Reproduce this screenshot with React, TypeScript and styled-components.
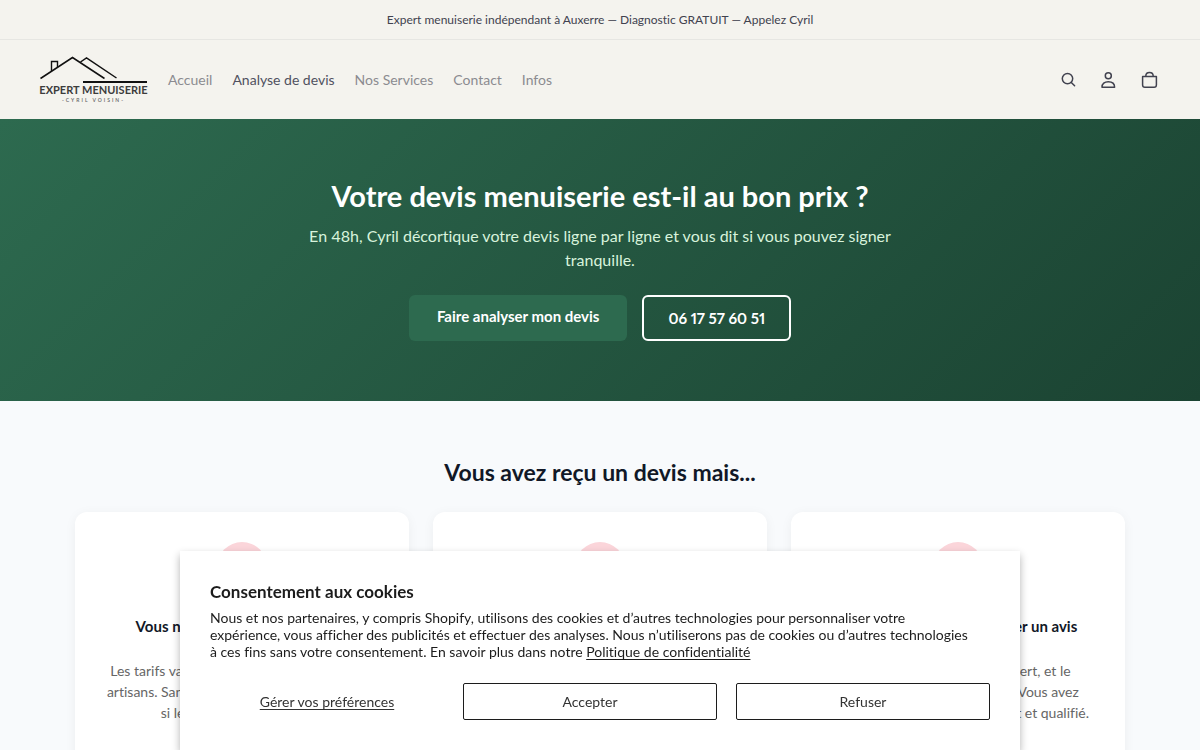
import React from "react";
import styled, { createGlobalStyle, css } from "styled-components";

const GlobalStyle = createGlobalStyle`
  *, *::before, *::after { box-sizing: border-box; }
  body {
    margin: 0;
    background: #f8fafc;
    color: #111827;
    font-family: Lato, "Liberation Sans", sans-serif;
    font-size: 14px;
    font-variant-ligatures: none;
    font-variant-numeric: proportional-nums;
  }
  h1, h2, h3, p { margin: 0; }
  button { font-family: inherit; cursor: pointer; }
`;

const Announcement = styled.p`
  height: 40px;
  padding: 0 20px;
  border-bottom: 1px solid #e6e6e2;
  background: #f4f3ee;
  color: #41424f;
  font-size: 12px;
  line-height: 39px;
  text-align: center;
`;

const Header = styled.header`
  display: flex;
  align-items: center;
  height: 79px;
  padding: 0 32px 0 40px;
  background: #f4f3ee;
`;

const Logo = styled.a`
  display: flex;
  flex-direction: column;
  align-items: center;
  width: 107px;
  color: #3c3c3c;
  text-decoration: none;
  white-space: nowrap;
`;

const LogoName = styled.span`
  font-size: 11px;
  font-weight: 700;
  line-height: 12px;
`;

const LogoTag = styled.span`
  color: #666;
  font-size: 5px;
  font-weight: 600;
  line-height: 8px;
  letter-spacing: 2px;
`;

const Nav = styled.nav`
  display: flex;
  flex: 1;
  gap: 20px;
  padding-left: 21px;
`;

const NavLink = styled.a<{ $current?: boolean }>`
  color: ${(p) => (p.$current ? "#50515f" : "#8b8b90")};
  font-size: 14px;
  line-height: 20px;
  text-decoration: none;
`;

const IconButton = styled.button`
  display: grid;
  place-items: center;
  width: 40px;
  height: 40px;
  padding: 0;
  border: 0;
  background: none;
  color: #41424f;
`;

const Hero = styled.section`
  display: flex;
  flex-direction: column;
  align-items: center;
  padding: 60px 20px;
  background: linear-gradient(135deg, #2d6a4f, #1b4332);
  text-align: center;
`;

const HeroTitle = styled.h1`
  color: #fff;
  font-size: 29px;
  font-weight: 700;
  line-height: 34px;
`;

const HeroText = styled.p`
  max-width: 600px;
  padding: 11px 0 23px;
  color: #d8f3dc;
  font-size: 16px;
  line-height: 24px;
`;

const HeroActions = styled.div`
  display: flex;
  flex-wrap: wrap;
  justify-content: center;
  gap: 15px;
`;

const HeroLink = styled.a<{ $outline?: boolean }>`
  height: 46px;
  border-radius: 6px;
  color: #fff;
  font-size: 15px;
  font-weight: 700;
  line-height: 42px;
  text-decoration: none;
  ${(p) =>
    p.$outline
      ? css`
          padding: 0 24px;
          border: 2px solid #fff;
        `
      : css`
          padding: 0 28px;
          background: #2d6a4f;
        `}
`;

const Doubts = styled.section`
  max-width: 1090px;
  margin: 0 auto;
  padding: 54px 20px;
`;

const SectionTitle = styled.h2`
  color: #111827;
  font-size: 23px;
  font-weight: 700;
  line-height: 34px;
  text-align: center;
`;

const CardGrid = styled.div`
  display: grid;
  grid-template-columns: repeat(3, 1fr);
  gap: 24px;
  padding-top: 23px;
`;

const Card = styled.article`
  display: flex;
  flex-direction: column;
  align-items: center;
  padding: 30px 20px 50px;
  border-radius: 12px;
  background: #fff;
  box-shadow: 0 2px 12px rgba(0, 0, 0, 0.05);
  text-align: center;
`;

const CardBadge = styled.span`
  width: 50px;
  height: 50px;
  border-radius: 50%;
  background: #fbd5da;
`;

const CardTitle = styled.h3`
  padding-top: 21px;
  color: #111827;
  font-size: 15px;
  font-weight: 700;
  line-height: 26px;
`;

const CardText = styled.p`
  padding-top: 21px;
  color: #666;
  font-size: 14px;
  line-height: 21px;
`;

const Consent = styled.div`
  position: fixed;
  bottom: 0;
  left: 50%;
  width: calc(100% - 40px);
  max-width: 840px;
  padding: 30px;
  transform: translateX(-50%);
  background: #fff;
  box-shadow: 0 4px 8px rgba(0, 0, 0, 0.3);
  color: #1c1c1c;
`;

const ConsentTitle = styled.h2`
  font-size: 17px;
  font-weight: 700;
  line-height: 21px;
`;

const ConsentText = styled.p`
  max-width: 766px;
  padding: 7px 0 23px;
  font-size: 14px;
  line-height: 17px;
`;

const ConsentLink = styled.a`
  color: inherit;
  text-underline-offset: 2px;
`;

const ConsentActions = styled.div`
  display: grid;
  grid-template-columns: 1fr 254px 254px;
  gap: 19px;
`;

const ConsentButton = styled.button<{ $plain?: boolean }>`
  height: 37px;
  padding: 0;
  border: ${(p) => (p.$plain ? "0" : "1px solid #1c1c1c")};
  border-radius: 2px;
  background: #fff;
  color: #333;
  font-size: 14px;
  text-decoration: ${(p) => (p.$plain ? "underline" : "none")};
  text-underline-offset: 2px;
`;

const navItems = ["Accueil", "Analyse de devis", "Nos Services", "Contact", "Infos"];

const cards = [
  {
    id: "price",
    title: "Vous ne comprenez pas le détail",
    lines: [
      "Les tarifs varient du simple au double selon",
      "artisans. Sans repère, impossible de le savoir",
      "si le prix proposé est juste.",
    ],
  },
  { id: "quality", title: "", lines: [] },
  {
    id: "advice",
    title: "Vous souhaiteriez demander un avis",
    lines: [
      "Vous n’êtes pas toujours expert, et le",
      "vendeur veut signer très vite. Vous avez",
      "besoin d’un avis neutre, concret et qualifié.",
    ],
  },
];

const RoofMark = () => (
  <svg width="107" height="28" viewBox="0 0 107 28" fill="none" stroke="#111" aria-hidden="true">
    <path d="M0.5 22.5 L32.5 1.5 L64.5 22.5" strokeWidth="1.5" />
    <path d="M11.5 15 V5.5 H17.5 V11" strokeWidth="1.4" />
    <path d="M40.5 6 L46.5 2 L76.5 22" strokeWidth="1.5" />
    <path d="M43 26 H107" strokeWidth="2" />
  </svg>
);

const Icon = ({ children }: { children: React.ReactNode }) => (
  <svg
    width="20"
    height="20"
    viewBox="0 0 20 20"
    fill="none"
    stroke="currentColor"
    strokeWidth="1.5"
    strokeLinecap="round"
    strokeLinejoin="round"
    aria-hidden="true"
  >
    {children}
  </svg>
);

export default function App() {
  return (
    <>
      <GlobalStyle />
      <Announcement>
        Expert menuiserie indépendant à Auxerre — Diagnostic GRATUIT — Appelez Cyril
      </Announcement>
      <Header>
        <Logo href="#">
          <RoofMark />
          <LogoName>EXPERT MENUISERIE</LogoName>
          <LogoTag>-CYRIL VOISIN-</LogoTag>
        </Logo>
        <Nav>
          {navItems.map((item) => (
            <NavLink key={item} href="#" $current={item === "Analyse de devis"}>
              {item}
            </NavLink>
          ))}
        </Nav>
        <IconButton aria-label="Recherche">
          <Icon>
            <circle cx="9.5" cy="8.6" r="5.2" />
            <path d="M13.3 12.4 L16.6 15.8" />
          </Icon>
        </IconButton>
        <IconButton aria-label="Compte">
          <Icon>
            <circle cx="10.3" cy="5.8" r="3" />
            <path d="M4 17.2 C4 13.7 6.5 11.7 10.3 11.7 C14.1 11.7 16.6 13.7 16.6 17.2 Z" />
          </Icon>
        </IconButton>
        <IconButton aria-label="Panier">
          <Icon>
            <path d="M4.6 6.4 H18.4 V15 Q18.4 17.3 16.1 17.3 H6.9 Q4.6 17.3 4.6 15 Z" />
            <path d="M7.8 6.2 C7.8 1.4 15.2 1.4 15.2 6.2" />
          </Icon>
        </IconButton>
      </Header>
      <main>
        <Hero>
          <HeroTitle>Votre devis menuiserie est-il au bon prix ?</HeroTitle>
          <HeroText>
            En 48h, Cyril décortique votre devis ligne par ligne et vous dit si vous pouvez signer
            tranquille.
          </HeroText>
          <HeroActions>
            <HeroLink href="#">Faire analyser mon devis</HeroLink>
            <HeroLink href="tel:0617576051" $outline>
              06 17 57 60 51
            </HeroLink>
          </HeroActions>
        </Hero>
        <Doubts>
          <SectionTitle>Vous avez reçu un devis mais...</SectionTitle>
          <CardGrid>
            {cards.map((card) => (
              <Card key={card.id}>
                <CardBadge />
                {card.title && <CardTitle>{card.title}</CardTitle>}
                <CardText>
                  {card.lines.map((line) => (
                    <React.Fragment key={line}>
                      {line}
                      <br />
                    </React.Fragment>
                  ))}
                </CardText>
              </Card>
            ))}
          </CardGrid>
        </Doubts>
      </main>
      <Consent role="dialog" aria-labelledby="consent-title">
        <ConsentTitle id="consent-title">Consentement aux cookies</ConsentTitle>
        <ConsentText>
          Nous et nos partenaires, y compris Shopify, utilisons des cookies et d’autres technologies
          pour personnaliser votre expérience, vous afficher des publicités et effectuer des
          analyses. Nous n’utiliserons pas de cookies ou d’autres technologies à ces fins sans votre
          consentement. En savoir plus dans notre{" "}
          <ConsentLink href="#">Politique de confidentialité</ConsentLink>
        </ConsentText>
        <ConsentActions>
          <ConsentButton $plain>Gérer vos préférences</ConsentButton>
          <ConsentButton>Accepter</ConsentButton>
          <ConsentButton>Refuser</ConsentButton>
        </ConsentActions>
      </Consent>
    </>
  );
}
